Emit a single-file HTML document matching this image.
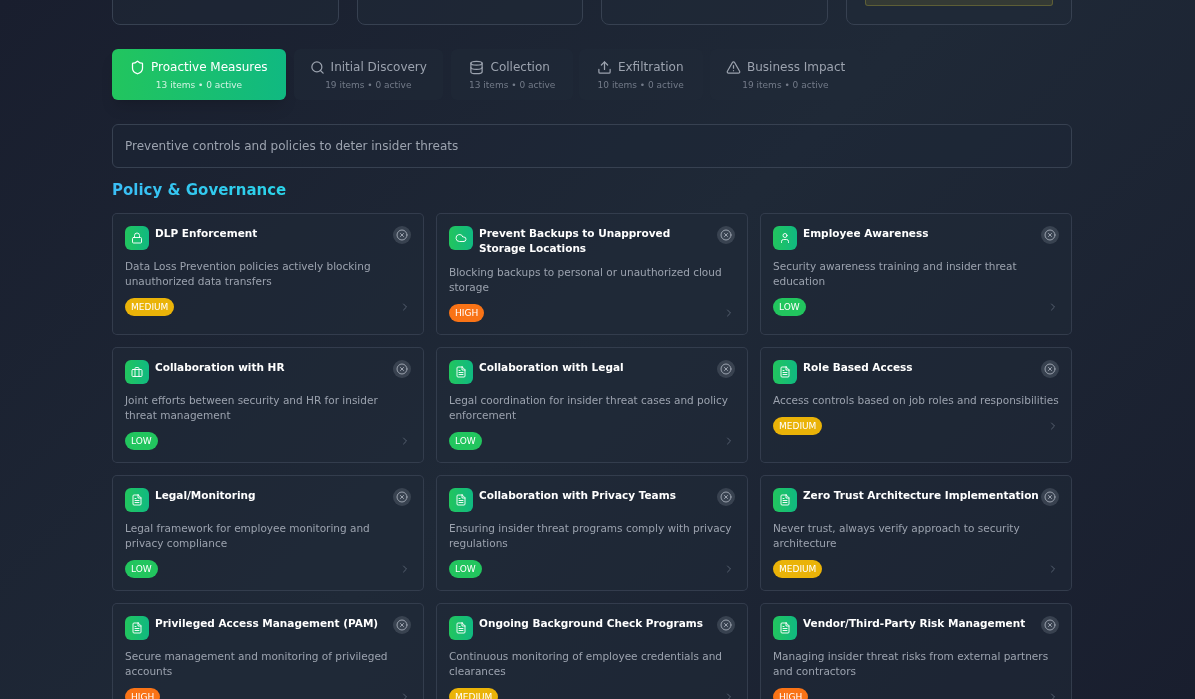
<!DOCTYPE html>
<html lang="en">
<head>
<meta charset="utf-8">
<title>Insider Threat Matrix</title>
<style>
*{box-sizing:border-box;margin:0;padding:0}
html,body{width:1195px;height:699px;overflow:hidden;background:#1c2433}
body{font-family:"DejaVu Sans","Liberation Sans",sans-serif;color:#fff;position:relative}
.bg{position:absolute;left:0;top:0;width:1195px;height:699px;background:linear-gradient(135deg,#191e2e 0%,#1f2937 50%,#191e2e 100%)}
.wrap{position:absolute;left:112px;top:0;width:960px;height:699px;will-change:transform}
.stats{position:absolute;left:0;top:-100px;width:960px;height:125px;display:flex;gap:18px}
.stat{flex:1;border:1px solid #374151;border-radius:8px;background:rgba(31,41,55,.5);position:relative}
.warn{position:absolute;left:18.5px;right:18.5px;bottom:18px;height:40px;border:1px solid rgba(190,180,60,.3);border-radius:3px;background:rgba(200,180,40,.13)}
.tabs{position:absolute;left:0;top:49px;height:51px;width:960px}
.tab{position:absolute;top:0;height:51px;border:0;border-radius:6px;background:rgba(31,41,55,.5);color:#9ca3af;font:inherit;display:block;text-align:center;padding:0}
.tab.active{background:linear-gradient(90deg,#22c55e,#10b981);color:#fff;box-shadow:0 10px 15px -3px rgba(0,0,0,.12),0 4px 6px -4px rgba(0,0,0,.12)}
.tl{display:flex;align-items:center;font-size:12px;line-height:18px;height:18px;margin-top:8.5px;white-space:nowrap}
.tl svg{position:relative;top:1px}
.ts{display:block;font-size:9px;line-height:13px;margin-top:3px;color:#737b89;white-space:nowrap}
.tab.active .ts{color:rgba(255,255,255,.8)}
.desc{position:absolute;left:0;top:124px;width:960px;height:44px;border:1px solid #374151;border-radius:6px;background:rgba(31,41,55,.3);font-size:12px;line-height:42px;padding-left:12px;color:#9ca3af}
.sec{position:absolute;left:0;top:180px;font-size:15px;line-height:20px;font-weight:bold;color:#34c9f0;background:linear-gradient(90deg,#3bbef6,#2ad4e9);-webkit-background-clip:text;background-clip:text;-webkit-text-fill-color:transparent}
.grid{position:absolute;left:0;top:213px;width:960px;display:grid;grid-template-columns:repeat(3,312px);gap:12px}
.card{border:1px solid rgba(55,65,81,.85);border-radius:5px;background:rgba(31,41,55,.5);padding:12px;min-height:116px}
.hd{display:flex;align-items:flex-start}
.ico{flex:none;width:24px;height:24px;border-radius:6px;background:linear-gradient(90deg,#22c55e,#10b981);display:flex;align-items:center;justify-content:center;color:rgba(255,255,255,.92);margin-right:6px}
h3{flex:1;font-size:10.5px;line-height:15px;font-weight:bold;color:#fff}
.x{flex:none;width:18px;height:18px;border-radius:50%;background:rgba(75,85,99,.6);color:#9ca3af;display:flex;align-items:center;justify-content:center;margin-left:0}
p{font-size:10.5px;line-height:15px;color:#9ca3af;margin-top:9px}
.ft{display:flex;align-items:center;justify-content:space-between;margin-top:9px;height:18px}
.bd{font-size:9px;line-height:18px;height:18px;border-radius:9px;padding:0 6px;color:#fff}
.medium{background:#eab308}.high{background:#f97316}.low{background:#22c55e}
.chev{color:#566070;margin-right:0}
svg{display:block;flex:none}
</style>
</head>
<body>
<div class="bg"></div>
<div class="wrap">
<div class="stats"><div class="stat"></div><div class="stat"></div><div class="stat"></div><div class="stat"><div class="warn"></div></div></div>
<div class="tabs">
<div class="tab active" style="left:0px;width:174px"><span class="tl" style="padding-left:18px"><svg class="" width="15" height="15" viewBox="0 0 24 24" fill="none" stroke="currentColor" stroke-width="2" stroke-linecap="round" stroke-linejoin="round"><path d="M20 13c0 5-3.5 7.5-7.66 8.95a1 1 0 0 1-.67-.01C7.5 20.5 4 18 4 13V6a1 1 0 0 1 1-1c2 0 4.5-1.2 6.24-2.72a1.17 1.17 0 0 1 1.52 0C14.51 3.81 17 5 19 5a1 1 0 0 1 1 1z"/></svg><span style="margin-left:6px">Proactive Measures</span></span><span class="ts">13 items • 0 active</span></div>
<div class="tab" style="left:181.6px;width:149.4px"><span class="tl" style="padding-left:16px"><svg class="" width="15" height="15" viewBox="0 0 24 24" fill="none" stroke="currentColor" stroke-width="2" stroke-linecap="round" stroke-linejoin="round"><circle cx="11" cy="11" r="8"/><path d="m21 21-4.3-4.3"/></svg><span style="margin-left:6px">Initial Discovery</span></span><span class="ts">19 items • 0 active</span></div>
<div class="tab" style="left:339px;width:122.4px"><span class="tl" style="padding-left:17.85px"><svg class="" width="15" height="15" viewBox="0 0 24 24" fill="none" stroke="currentColor" stroke-width="2" stroke-linecap="round" stroke-linejoin="round"><ellipse cx="12" cy="5" rx="9" ry="3"/><path d="M3 5V19A9 3 0 0 0 21 19V5"/><path d="M3 12A9 3 0 0 0 21 12"/></svg><span style="margin-left:6.7px">Collection</span></span><span class="ts">13 items • 0 active</span></div>
<div class="tab" style="left:467px;width:123.5px"><span class="tl" style="padding-left:17.95px"><svg class="" width="15" height="15" viewBox="0 0 24 24" fill="none" stroke="currentColor" stroke-width="2" stroke-linecap="round" stroke-linejoin="round"><path d="M21 15v4a2 2 0 0 1-2 2H5a2 2 0 0 1-2-2v-4"/><polyline points="17 8 12 3 7 8"/><line x1="12" x2="12" y1="3" y2="15"/></svg><span style="margin-left:6px">Exfiltration</span></span><span class="ts">10 items • 0 active</span></div>
<div class="tab" style="left:597.8px;width:151.2px"><span class="tl" style="padding-left:16.2px"><svg class="" width="15" height="15" viewBox="0 0 24 24" fill="none" stroke="currentColor" stroke-width="2" stroke-linecap="round" stroke-linejoin="round"><path d="m21.73 18-8-14a2 2 0 0 0-3.48 0l-8 14A2 2 0 0 0 4 21h16a2 2 0 0 0 1.73-3"/><path d="M12 9v4"/><path d="M12 17h.01"/></svg><span style="margin-left:6px">Business Impact</span></span><span class="ts">19 items • 0 active</span></div>
</div>
<div class="desc">Preventive controls and policies to deter insider threats</div>
<h2 class="sec">Policy &amp; Governance</h2>
<div class="grid">
<div class="card"><div class="hd"><span class="ico"><svg class="" width="12" height="12" viewBox="0 0 24 24" fill="none" stroke="currentColor" stroke-width="2" stroke-linecap="round" stroke-linejoin="round"><rect width="18" height="11" x="3" y="11" rx="2" ry="2"/><path d="M7 11V7a5 5 0 0 1 10 0v4"/></svg></span><h3>DLP Enforcement</h3><span class="x"><svg class="" width="12" height="12" viewBox="0 0 24 24" fill="none" stroke="currentColor" stroke-width="2" stroke-linecap="round" stroke-linejoin="round"><circle cx="12" cy="12" r="10"/><path d="m15 9-6 6"/><path d="m9 9 6 6"/></svg></span></div><p>Data Loss Prevention policies actively blocking unauthorized data transfers</p><div class="ft"><span class="bd medium">MEDIUM</span><svg class="chev" width="12" height="12" viewBox="0 0 24 24" fill="none" stroke="currentColor" stroke-width="2" stroke-linecap="round" stroke-linejoin="round"><path d="m9 18 6-6-6-6"/></svg></div></div>
<div class="card"><div class="hd"><span class="ico"><svg class="" width="12" height="12" viewBox="0 0 24 24" fill="none" stroke="currentColor" stroke-width="2" stroke-linecap="round" stroke-linejoin="round"><path d="M17.5 19H9a7 7 0 1 1 6.71-9h1.79a4.5 4.5 0 1 1 0 9Z"/></svg></span><h3>Prevent Backups to Unapproved Storage Locations</h3><span class="x"><svg class="" width="12" height="12" viewBox="0 0 24 24" fill="none" stroke="currentColor" stroke-width="2" stroke-linecap="round" stroke-linejoin="round"><circle cx="12" cy="12" r="10"/><path d="m15 9-6 6"/><path d="m9 9 6 6"/></svg></span></div><p>Blocking backups to personal or unauthorized cloud storage</p><div class="ft"><span class="bd high">HIGH</span><svg class="chev" width="12" height="12" viewBox="0 0 24 24" fill="none" stroke="currentColor" stroke-width="2" stroke-linecap="round" stroke-linejoin="round"><path d="m9 18 6-6-6-6"/></svg></div></div>
<div class="card"><div class="hd"><span class="ico"><svg class="" width="12" height="12" viewBox="0 0 24 24" fill="none" stroke="currentColor" stroke-width="2" stroke-linecap="round" stroke-linejoin="round"><path d="M19 21v-2a4 4 0 0 0-4-4H9a4 4 0 0 0-4 4v2"/><circle cx="12" cy="7" r="4"/></svg></span><h3>Employee Awareness</h3><span class="x"><svg class="" width="12" height="12" viewBox="0 0 24 24" fill="none" stroke="currentColor" stroke-width="2" stroke-linecap="round" stroke-linejoin="round"><circle cx="12" cy="12" r="10"/><path d="m15 9-6 6"/><path d="m9 9 6 6"/></svg></span></div><p>Security awareness training and insider threat education</p><div class="ft"><span class="bd low">LOW</span><svg class="chev" width="12" height="12" viewBox="0 0 24 24" fill="none" stroke="currentColor" stroke-width="2" stroke-linecap="round" stroke-linejoin="round"><path d="m9 18 6-6-6-6"/></svg></div></div>
<div class="card"><div class="hd"><span class="ico"><svg class="" width="12" height="12" viewBox="0 0 24 24" fill="none" stroke="currentColor" stroke-width="2" stroke-linecap="round" stroke-linejoin="round"><rect width="20" height="14" x="2" y="7" rx="2" ry="2"/><path d="M16 21V5a2 2 0 0 0-2-2h-4a2 2 0 0 0-2 2v16"/></svg></span><h3>Collaboration with HR</h3><span class="x"><svg class="" width="12" height="12" viewBox="0 0 24 24" fill="none" stroke="currentColor" stroke-width="2" stroke-linecap="round" stroke-linejoin="round"><circle cx="12" cy="12" r="10"/><path d="m15 9-6 6"/><path d="m9 9 6 6"/></svg></span></div><p>Joint efforts between security and HR for insider threat management</p><div class="ft"><span class="bd low">LOW</span><svg class="chev" width="12" height="12" viewBox="0 0 24 24" fill="none" stroke="currentColor" stroke-width="2" stroke-linecap="round" stroke-linejoin="round"><path d="m9 18 6-6-6-6"/></svg></div></div>
<div class="card"><div class="hd"><span class="ico"><svg class="" width="12" height="12" viewBox="0 0 24 24" fill="none" stroke="currentColor" stroke-width="2" stroke-linecap="round" stroke-linejoin="round"><path d="M14.5 2H6a2 2 0 0 0-2 2v16a2 2 0 0 0 2 2h12a2 2 0 0 0 2-2V7.5L14.5 2z"/><polyline points="14 2 14 8 20 8"/><line x1="16" x2="8" y1="13" y2="13"/><line x1="16" x2="8" y1="17" y2="17"/><line x1="10" x2="8" y1="9" y2="9"/></svg></span><h3>Collaboration with Legal</h3><span class="x"><svg class="" width="12" height="12" viewBox="0 0 24 24" fill="none" stroke="currentColor" stroke-width="2" stroke-linecap="round" stroke-linejoin="round"><circle cx="12" cy="12" r="10"/><path d="m15 9-6 6"/><path d="m9 9 6 6"/></svg></span></div><p>Legal coordination for insider threat cases and policy enforcement</p><div class="ft"><span class="bd low">LOW</span><svg class="chev" width="12" height="12" viewBox="0 0 24 24" fill="none" stroke="currentColor" stroke-width="2" stroke-linecap="round" stroke-linejoin="round"><path d="m9 18 6-6-6-6"/></svg></div></div>
<div class="card"><div class="hd"><span class="ico"><svg class="" width="12" height="12" viewBox="0 0 24 24" fill="none" stroke="currentColor" stroke-width="2" stroke-linecap="round" stroke-linejoin="round"><path d="M14.5 2H6a2 2 0 0 0-2 2v16a2 2 0 0 0 2 2h12a2 2 0 0 0 2-2V7.5L14.5 2z"/><polyline points="14 2 14 8 20 8"/><line x1="16" x2="8" y1="13" y2="13"/><line x1="16" x2="8" y1="17" y2="17"/><line x1="10" x2="8" y1="9" y2="9"/></svg></span><h3>Role Based Access</h3><span class="x"><svg class="" width="12" height="12" viewBox="0 0 24 24" fill="none" stroke="currentColor" stroke-width="2" stroke-linecap="round" stroke-linejoin="round"><circle cx="12" cy="12" r="10"/><path d="m15 9-6 6"/><path d="m9 9 6 6"/></svg></span></div><p>Access controls based on job roles and responsibilities</p><div class="ft"><span class="bd medium">MEDIUM</span><svg class="chev" width="12" height="12" viewBox="0 0 24 24" fill="none" stroke="currentColor" stroke-width="2" stroke-linecap="round" stroke-linejoin="round"><path d="m9 18 6-6-6-6"/></svg></div></div>
<div class="card"><div class="hd"><span class="ico"><svg class="" width="12" height="12" viewBox="0 0 24 24" fill="none" stroke="currentColor" stroke-width="2" stroke-linecap="round" stroke-linejoin="round"><path d="M14.5 2H6a2 2 0 0 0-2 2v16a2 2 0 0 0 2 2h12a2 2 0 0 0 2-2V7.5L14.5 2z"/><polyline points="14 2 14 8 20 8"/><line x1="16" x2="8" y1="13" y2="13"/><line x1="16" x2="8" y1="17" y2="17"/><line x1="10" x2="8" y1="9" y2="9"/></svg></span><h3>Legal/Monitoring</h3><span class="x"><svg class="" width="12" height="12" viewBox="0 0 24 24" fill="none" stroke="currentColor" stroke-width="2" stroke-linecap="round" stroke-linejoin="round"><circle cx="12" cy="12" r="10"/><path d="m15 9-6 6"/><path d="m9 9 6 6"/></svg></span></div><p>Legal framework for employee monitoring and privacy compliance</p><div class="ft"><span class="bd low">LOW</span><svg class="chev" width="12" height="12" viewBox="0 0 24 24" fill="none" stroke="currentColor" stroke-width="2" stroke-linecap="round" stroke-linejoin="round"><path d="m9 18 6-6-6-6"/></svg></div></div>
<div class="card"><div class="hd"><span class="ico"><svg class="" width="12" height="12" viewBox="0 0 24 24" fill="none" stroke="currentColor" stroke-width="2" stroke-linecap="round" stroke-linejoin="round"><path d="M14.5 2H6a2 2 0 0 0-2 2v16a2 2 0 0 0 2 2h12a2 2 0 0 0 2-2V7.5L14.5 2z"/><polyline points="14 2 14 8 20 8"/><line x1="16" x2="8" y1="13" y2="13"/><line x1="16" x2="8" y1="17" y2="17"/><line x1="10" x2="8" y1="9" y2="9"/></svg></span><h3>Collaboration with Privacy Teams</h3><span class="x"><svg class="" width="12" height="12" viewBox="0 0 24 24" fill="none" stroke="currentColor" stroke-width="2" stroke-linecap="round" stroke-linejoin="round"><circle cx="12" cy="12" r="10"/><path d="m15 9-6 6"/><path d="m9 9 6 6"/></svg></span></div><p>Ensuring insider threat programs comply with privacy regulations</p><div class="ft"><span class="bd low">LOW</span><svg class="chev" width="12" height="12" viewBox="0 0 24 24" fill="none" stroke="currentColor" stroke-width="2" stroke-linecap="round" stroke-linejoin="round"><path d="m9 18 6-6-6-6"/></svg></div></div>
<div class="card"><div class="hd"><span class="ico"><svg class="" width="12" height="12" viewBox="0 0 24 24" fill="none" stroke="currentColor" stroke-width="2" stroke-linecap="round" stroke-linejoin="round"><path d="M14.5 2H6a2 2 0 0 0-2 2v16a2 2 0 0 0 2 2h12a2 2 0 0 0 2-2V7.5L14.5 2z"/><polyline points="14 2 14 8 20 8"/><line x1="16" x2="8" y1="13" y2="13"/><line x1="16" x2="8" y1="17" y2="17"/><line x1="10" x2="8" y1="9" y2="9"/></svg></span><h3>Zero Trust Architecture Implementation</h3><span class="x"><svg class="" width="12" height="12" viewBox="0 0 24 24" fill="none" stroke="currentColor" stroke-width="2" stroke-linecap="round" stroke-linejoin="round"><circle cx="12" cy="12" r="10"/><path d="m15 9-6 6"/><path d="m9 9 6 6"/></svg></span></div><p>Never trust, always verify approach to security architecture</p><div class="ft"><span class="bd medium">MEDIUM</span><svg class="chev" width="12" height="12" viewBox="0 0 24 24" fill="none" stroke="currentColor" stroke-width="2" stroke-linecap="round" stroke-linejoin="round"><path d="m9 18 6-6-6-6"/></svg></div></div>
<div class="card"><div class="hd"><span class="ico"><svg class="" width="12" height="12" viewBox="0 0 24 24" fill="none" stroke="currentColor" stroke-width="2" stroke-linecap="round" stroke-linejoin="round"><path d="M14.5 2H6a2 2 0 0 0-2 2v16a2 2 0 0 0 2 2h12a2 2 0 0 0 2-2V7.5L14.5 2z"/><polyline points="14 2 14 8 20 8"/><line x1="16" x2="8" y1="13" y2="13"/><line x1="16" x2="8" y1="17" y2="17"/><line x1="10" x2="8" y1="9" y2="9"/></svg></span><h3>Privileged Access Management (PAM)</h3><span class="x"><svg class="" width="12" height="12" viewBox="0 0 24 24" fill="none" stroke="currentColor" stroke-width="2" stroke-linecap="round" stroke-linejoin="round"><circle cx="12" cy="12" r="10"/><path d="m15 9-6 6"/><path d="m9 9 6 6"/></svg></span></div><p>Secure management and monitoring of privileged accounts</p><div class="ft"><span class="bd high">HIGH</span><svg class="chev" width="12" height="12" viewBox="0 0 24 24" fill="none" stroke="currentColor" stroke-width="2" stroke-linecap="round" stroke-linejoin="round"><path d="m9 18 6-6-6-6"/></svg></div></div>
<div class="card"><div class="hd"><span class="ico"><svg class="" width="12" height="12" viewBox="0 0 24 24" fill="none" stroke="currentColor" stroke-width="2" stroke-linecap="round" stroke-linejoin="round"><path d="M14.5 2H6a2 2 0 0 0-2 2v16a2 2 0 0 0 2 2h12a2 2 0 0 0 2-2V7.5L14.5 2z"/><polyline points="14 2 14 8 20 8"/><line x1="16" x2="8" y1="13" y2="13"/><line x1="16" x2="8" y1="17" y2="17"/><line x1="10" x2="8" y1="9" y2="9"/></svg></span><h3>Ongoing Background Check Programs</h3><span class="x"><svg class="" width="12" height="12" viewBox="0 0 24 24" fill="none" stroke="currentColor" stroke-width="2" stroke-linecap="round" stroke-linejoin="round"><circle cx="12" cy="12" r="10"/><path d="m15 9-6 6"/><path d="m9 9 6 6"/></svg></span></div><p>Continuous monitoring of employee credentials and clearances</p><div class="ft"><span class="bd medium">MEDIUM</span><svg class="chev" width="12" height="12" viewBox="0 0 24 24" fill="none" stroke="currentColor" stroke-width="2" stroke-linecap="round" stroke-linejoin="round"><path d="m9 18 6-6-6-6"/></svg></div></div>
<div class="card"><div class="hd"><span class="ico"><svg class="" width="12" height="12" viewBox="0 0 24 24" fill="none" stroke="currentColor" stroke-width="2" stroke-linecap="round" stroke-linejoin="round"><path d="M14.5 2H6a2 2 0 0 0-2 2v16a2 2 0 0 0 2 2h12a2 2 0 0 0 2-2V7.5L14.5 2z"/><polyline points="14 2 14 8 20 8"/><line x1="16" x2="8" y1="13" y2="13"/><line x1="16" x2="8" y1="17" y2="17"/><line x1="10" x2="8" y1="9" y2="9"/></svg></span><h3>Vendor/Third-Party Risk Management</h3><span class="x"><svg class="" width="12" height="12" viewBox="0 0 24 24" fill="none" stroke="currentColor" stroke-width="2" stroke-linecap="round" stroke-linejoin="round"><circle cx="12" cy="12" r="10"/><path d="m15 9-6 6"/><path d="m9 9 6 6"/></svg></span></div><p>Managing insider threat risks from external partners and contractors</p><div class="ft"><span class="bd high">HIGH</span><svg class="chev" width="12" height="12" viewBox="0 0 24 24" fill="none" stroke="currentColor" stroke-width="2" stroke-linecap="round" stroke-linejoin="round"><path d="m9 18 6-6-6-6"/></svg></div></div>
</div>
</div>
</body>
</html>
